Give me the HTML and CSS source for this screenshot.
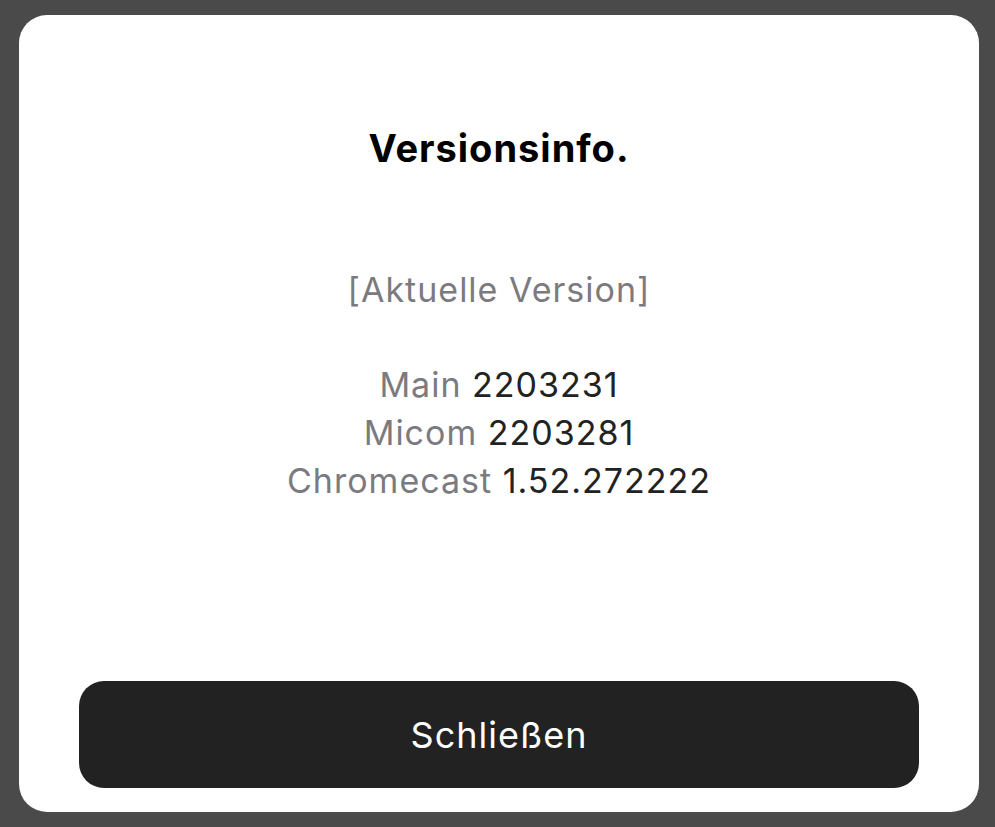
FILE: index.html
```html
<!DOCTYPE html>
<html lang="de">
<head>
  <meta charset="UTF-8" />
  <meta name="viewport" content="width=device-width, initial-scale=1.0"/>
  <title>Versionsinfo</title>
  <link rel="stylesheet" href="styles.css">
</head>
<body>
  <div class="dialog">
    <h2 class="dialog-title">Versionsinfo.</h2>

    <div class="version-block">
      <div class="version-heading">[Aktuelle Version]</div>
      <div class="version-list">
        <div class="version-row"><span class="label">Main</span> <span class="value">2203231</span></div>
        <div class="version-row"><span class="label">Micom</span> <span class="value">2203281</span></div>
        <div class="version-row"><span class="label">Chromecast</span> <span class="value">1.52.272222</span></div>
      </div>
    </div>

    <button class="close-btn">Schließen</button>
  </div>
</body>
</html>
```

FILE: styles.css
```css
body {
  margin: 0;
  font-family: Inter, "Noto Sans", sans-serif;
  background: #4a4a4a;
  height: 100vh;
  box-sizing: border-box;
  padding: 15px 16px 14px 19px;
}

.dialog {
  width: 960px;
  height: 797px;
  background: #fff;
  border-radius: 28px;
  box-sizing: border-box;
  padding: 111px 60px 24px;
  display: flex;
  flex-direction: column;
  align-items: center;
}

.dialog-title {
  margin: 0;
  font-size: 38px;
  line-height: 44px;
  letter-spacing: 1px;
  font-weight: 700;
  color: #000;
}

.version-block {
  text-align: center;
  font-size: 34px;
  line-height: 48px;
  letter-spacing: 1px;
}

.version-heading {
  margin-top: 96px;
  color: #7b7b7f;
}

.version-list {
  margin-top: 47px;
}

.version-row .label {
  color: #7b7b7f;
}

.version-row .value {
  color: #222;
}

.close-btn {
  margin-top: auto;
  width: 100%;
  height: 107px;
  background: #222;
  color: #fff;
  border: none;
  border-radius: 25px;
  font-family: inherit;
  font-size: 36px;
  letter-spacing: 1px;
  cursor: pointer;
}
```
